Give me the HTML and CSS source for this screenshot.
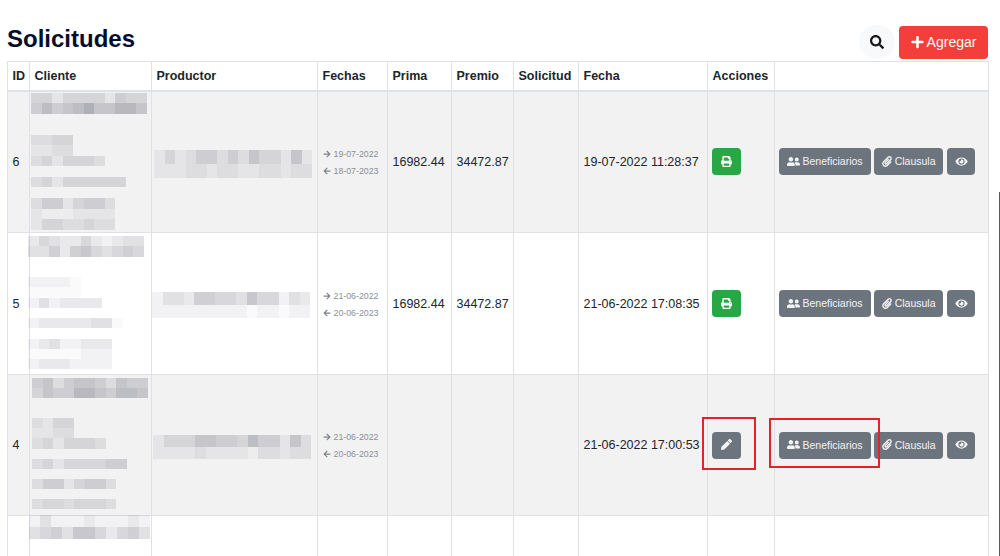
FILE: index.html
```html
<!DOCTYPE html>
<html lang="es">
<head>
<meta charset="utf-8">
<title>Solicitudes</title>
<link rel="stylesheet" href="styles.css">
</head>
<body>
<svg class="defs" aria-hidden="true">
  <symbol id="i-search" viewBox="0 0 512 512"><path d="M505 442.7L405.3 343c-4.5-4.5-10.6-7-17-7H372c27.6-35.3 44-79.7 44-128C416 93.1 322.9 0 208 0S0 93.1 0 208s93.1 208 208 208c48.3 0 92.7-16.4 128-44v16.3c0 6.4 2.5 12.5 7 17l99.7 99.7c9.4 9.4 24.6 9.4 33.9 0l28.3-28.3c9.4-9.4 9.4-24.6.1-34zM208 336c-70.7 0-128-57.2-128-128 0-70.7 57.2-128 128-128 70.7 0 128 57.2 128 128 0 70.7-57.2 128-128 128z"/></symbol>
  <symbol id="i-plus" viewBox="0 0 448 512"><path d="M416 208H272V64c0-17.67-14.33-32-32-32h-32c-17.67 0-32 14.33-32 32v144H32c-17.67 0-32 14.33-32 32v32c0 17.67 14.33 32 32 32h144v144c0 17.67 14.33 32 32 32h32c17.67 0 32-14.33 32-32V304h144c17.67 0 32-14.33 32-32v-32c0-17.67-14.33-32-32-32z"/></symbol>
  <symbol id="i-print" viewBox="0 0 512 512"><path d="M448 192V77.25c0-8.49-3.37-16.62-9.37-22.63L393.37 9.37c-6-6-14.14-9.37-22.63-9.37H96C78.33 0 64 14.33 64 32v160c-35.35 0-64 28.65-64 64v112c0 8.84 7.16 16 16 16h48v96c0 17.67 14.33 32 32 32h320c17.67 0 32-14.33 32-32v-96h48c8.84 0 16-7.16 16-16V256c0-35.35-28.65-64-64-64zm-64 256H128v-96h256v96zm0-224H128V64h192v48c0 8.84 7.16 16 16 16h48v96zm48 72c-13.25 0-24-10.75-24-24 0-13.26 10.75-24 24-24s24 10.74 24 24c0 13.25-10.75 24-24 24z"/></symbol>
  <symbol id="i-pencil" viewBox="0 0 512 512"><path d="M497.9 142.1l-46.1 46.1c-4.7 4.7-12.3 4.7-17 0l-111-111c-4.7-4.7-4.7-12.3 0-17l46.1-46.1c18.7-18.7 49.1-18.7 67.9 0l60.1 60.1c18.8 18.7 18.8 49.1 0 67.9zM284.2 99.8L21.6 362.4.4 483.9c-2.9 16.4 11.4 30.6 27.8 27.8l121.5-21.3 262.6-262.6c4.7-4.7 4.7-12.3 0-17l-111-111c-4.8-4.7-12.4-4.7-17.1 0z"/></symbol>
  <symbol id="i-users" viewBox="0 0 640 512"><path d="M192 256c61.9 0 112-50.1 112-112S253.9 32 192 32 80 82.1 80 144s50.1 112 112 112zm76.8 32h-8.3c-20.8 10-43.9 16-68.5 16s-47.6-6-68.5-16h-8.3C51.6 288 0 339.6 0 403.2V432c0 26.5 21.5 48 48 48h288c26.5 0 48-21.5 48-48v-28.8c0-63.6-51.6-115.2-115.2-115.2zM480 256c53 0 96-43 96-96s-43-96-96-96-96 43-96 96 43 96 96 96zm48 32h-3.8c-13.9 4.8-28.6 8-44.2 8s-30.3-3.2-44.2-8H432c-20.4 0-39.2 5.9-55.7 15.4 24.4 26.3 39.7 61.2 39.7 99.8v38.4c0 2.2-.5 4.3-.6 6.4H592c26.5 0 48-21.5 48-48 0-61.9-50.1-112-112-112z"/></symbol>
  <symbol id="i-clip" viewBox="0 0 448 512"><path d="M43.246 466.142c-58.43-60.289-57.341-157.511 1.386-217.581L254.392 34c44.316-45.332 116.351-45.336 160.671 0 43.89 44.894 43.943 117.329 0 162.276L232.214 383.128c-29.855 30.537-78.633 30.111-107.982-.998-28.275-29.97-27.368-77.473 1.452-106.953l143.743-146.835c6.182-6.314 16.312-6.422 22.626-.241l22.861 22.379c6.315 6.182 6.422 16.312.241 22.626L171.427 319.927c-4.932 5.045-5.236 13.428-.648 18.292 4.372 4.634 11.245 4.711 15.688.165l182.849-186.851c19.613-20.062 19.613-52.725-.011-72.798-19.189-19.627-49.957-19.637-69.154 0L90.39 293.295c-34.763 35.56-35.299 93.12-1.191 128.313 34.01 35.093 88.985 35.137 123.058.286l172.06-175.999c6.177-6.319 16.307-6.433 22.626-.256l22.877 22.364c6.319 6.177 6.434 16.307.256 22.626l-172.06 175.998c-59.576 60.938-155.943 60.216-214.77-.485z"/></symbol>
  <symbol id="i-eye" viewBox="0 0 576 512"><path d="M572.52 241.4C518.29 135.59 410.93 64 288 64S57.68 135.64 3.48 241.41a32.35 32.35 0 0 0 0 29.19C57.71 376.41 165.07 448 288 448s230.32-71.64 284.52-177.41a32.35 32.35 0 0 0 0-29.19zM288 400a144 144 0 1 1 144-144 143.93 143.93 0 0 1-144 144zm0-240a95.31 95.31 0 0 0-25.31 3.79 47.85 47.85 0 0 1-66.9 66.9A95.78 95.78 0 1 0 288 160z"/></symbol>
  <symbol id="i-right" viewBox="0 0 448 512"><path d="M190.5 66.9l22.2-22.2c9.4-9.4 24.6-9.4 33.9 0L441 239c9.4 9.4 9.4 24.6 0 33.9L246.6 467.3c-9.4 9.4-24.6 9.4-33.9 0l-22.2-22.2c-9.5-9.5-9.3-25 .4-34.3L311.4 296H24c-13.3 0-24-10.7-24-24v-32c0-13.3 10.7-24 24-24h287.4L190.9 101.2c-9.8-9.3-10-24.8-.4-34.3z"/></symbol>
  <symbol id="i-left" viewBox="0 0 448 512"><path d="M257.5 445.1l-22.2 22.2c-9.4 9.4-24.6 9.4-33.9 0L7 273c-9.4-9.4-9.4-24.6 0-33.9L201.4 44.7c9.4-9.4 24.6-9.4 33.9 0l22.2 22.2c9.5 9.5 9.3 25-.4 34.3L136.6 216H424c13.3 0 24 10.7 24 24v32c0 13.3-10.7 24-24 24H136.6l120.5 114.8c9.8 9.3 10 24.8.4 34.3z"/></symbol>
</svg>

<header class="top">
  <h1 class="title">Solicitudes</h1>
  <div class="tools">
    <button class="search" type="button"><svg class="ic-search"><use href="#i-search"/></svg></button>
    <button class="add" type="button"><svg class="ic-plus"><use href="#i-plus"/></svg>Agregar</button>
  </div>
</header>

<table class="grid">
  <colgroup>
    <col class="c-id"><col class="c-client"><col class="c-prod"><col class="c-dates"><col class="c-prima"><col class="c-premio"><col class="c-sol"><col class="c-date"><col class="c-act"><col class="c-more">
  </colgroup>
  <thead>
    <tr><th>ID</th><th>Cliente</th><th>Productor</th><th>Fechas</th><th>Prima</th><th>Premio</th><th>Solicitud</th><th>Fecha</th><th>Acciones</th><th></th></tr>
  </thead>
  <tbody>
    <tr class="r1">
      <td>6</td>
      <td class="blur"><div class="mosaic client h1 o1" data-rows="33133331433 46456855775 - - 2233 1122 2313332 - 231333333 - 24413442 10001111 13322322"></div></td>
      <td class="blur-mid"><div class="mosaic prod p1" data-rows="131244242533151 111221221122122"></div></td>
      <td class="dates"><div class="d"><svg class="ic-arrow"><use href="#i-right"/></svg>19-07-2022</div><div class="d"><svg class="ic-arrow"><use href="#i-left"/></svg>18-07-2023</div></td>
      <td>16982.44</td><td>34472.87</td><td></td><td>19-07-2022 11:28:37</td>
      <td class="tight"><button class="btn ok" type="button"><svg class="ic-s"><use href="#i-print"/></svg></button></td>
      <td class="tight"><div class="acts">
        <button class="btn" type="button"><svg class="ic-users"><use href="#i-users"/></svg>Beneficiarios</button>
        <button class="btn" type="button"><svg class="ic-clip"><use href="#i-clip"/></svg>Clausula</button>
        <button class="btn eye" type="button"><svg class="ic-eye"><use href="#i-eye"/></svg></button>
      </div></td>
    </tr>
    <tr class="r2">
      <td>5</td>
      <td class="blur"><div class="mosaic client h2 o2" data-rows="24322421233 33525643454 - - 11110 00000 1312222 - 122222330 - 12311222 00000111 12221111"></div></td>
      <td class="blur-mid"><div class="mosaic prod p2" data-rows="133255443644132 111111111011011"></div></td>
      <td class="dates"><div class="d"><svg class="ic-arrow"><use href="#i-right"/></svg>21-06-2022</div><div class="d"><svg class="ic-arrow"><use href="#i-left"/></svg>20-06-2023</div></td>
      <td>16982.44</td><td>34472.87</td><td></td><td>21-06-2022 17:08:35</td>
      <td class="tight"><button class="btn ok" type="button"><svg class="ic-s"><use href="#i-print"/></svg></button></td>
      <td class="tight"><div class="acts">
        <button class="btn" type="button"><svg class="ic-users"><use href="#i-users"/></svg>Beneficiarios</button>
        <button class="btn" type="button"><svg class="ic-clip"><use href="#i-clip"/></svg>Clausula</button>
        <button class="btn eye" type="button"><svg class="ic-eye"><use href="#i-eye"/></svg></button>
      </div></td>
    </tr>
    <tr class="r3">
      <td>4</td>
      <td class="blur"><div class="mosaic client h3 o3" data-rows="45245542544 35447754665 - - 2133 1122 2313332 - 231333344 - 24413442 - 23323332"></div></td>
      <td class="blur-mid"><div class="mosaic prod p3" data-rows="133355443644152 111121111022122"></div></td>
      <td class="dates"><div class="d"><svg class="ic-arrow"><use href="#i-right"/></svg>21-06-2022</div><div class="d"><svg class="ic-arrow"><use href="#i-left"/></svg>20-06-2023</div></td>
      <td></td><td></td><td></td><td>21-06-2022 17:00:53</td>
      <td class="tight"><button class="btn" type="button"><svg class="ic-s"><use href="#i-pencil"/></svg></button></td>
      <td class="tight"><div class="acts">
        <button class="btn" type="button"><svg class="ic-users"><use href="#i-users"/></svg>Beneficiarios</button>
        <button class="btn" type="button"><svg class="ic-clip"><use href="#i-clip"/></svg>Clausula</button>
        <button class="btn eye" type="button"><svg class="ic-eye"><use href="#i-eye"/></svg></button>
      </div></td>
    </tr>
    <tr class="r4">
      <td></td>
      <td class="blur"><div class="mosaic client h4 o4" data-rows="13111211121 34536642453"></div></td>
      <td></td><td></td><td></td><td></td><td></td><td></td><td></td><td></td>
    </tr>
  </tbody>
</table>

<div class="mark mark-edit"></div>
<div class="mark mark-ben"></div>
<div class="edge"></div>
<script src="script.js"></script>
</body>
</html>
```

FILE: styles.css
```css
* { box-sizing: border-box; }
html, body { margin: 0; padding: 0; }
body {
  position: relative;
  height: 556px;
  overflow: hidden;
  background: #fff;
  color: #212529;
  font-family: "Liberation Sans", Arial, sans-serif;
  font-size: 12.5px;
}
.defs { display: none; }
svg { fill: currentColor; display: block; flex: none; }

.top {
  display: flex;
  justify-content: space-between;
  align-items: flex-start;
  height: 61px;
  padding: 25px 12px 0 7px;
}
.title {
  margin: 0;
  font-size: 24px;
  line-height: 28px;
  font-weight: 700;
  color: #070b2c;
}
.tools { display: flex; align-items: center; gap: 4px; }
.search {
  width: 36px;
  height: 34px;
  border: 0;
  border-radius: 50%;
  background: #f8f9fa;
  color: #16181b;
  display: flex;
  align-items: center;
  justify-content: center;
  padding: 0;
}
.ic-search { width: 14px; height: 14px; }
.add {
  width: 89px;
  height: 33px;
  border: 0;
  border-radius: 4px;
  background: #f43e3a;
  color: #fff;
  font: 14px "Liberation Sans", Arial, sans-serif;
  display: flex;
  align-items: center;
  justify-content: center;
  gap: 3px;
  padding: 0;
}
.ic-plus { width: 13px; height: 14px; }

.grid {
  border-collapse: collapse;
  table-layout: fixed;
  width: 981px;
  margin-left: 7px;
}
.c-id { width: 22px; }
.c-client { width: 122px; }
.c-prod { width: 166px; }
.c-dates { width: 70px; }
.c-prima { width: 64px; }
.c-premio { width: 62px; }
.c-sol { width: 65px; }
.c-date { width: 129px; }
.c-act { width: 67px; }
.c-more { width: 214px; }
.grid th, .grid td {
  border: 1px solid #dee2e6;
  padding: 0 4.5px;
  text-align: left;
  vertical-align: middle;
  white-space: nowrap;
}
.grid th {
  height: 29px;
  font-weight: 700;
  border-bottom: 2px solid #dee2e6;
}
.r1 td { height: 142px; }
.r2 td { height: 142px; }
.r3 td { height: 141px; }
.r4 td { height: 141px; }
.r1, .r3 { background: #f2f2f3; }

.grid td.blur { padding: 0; vertical-align: top; }
.grid td.blur-mid { padding: 0; }
.grid td.tight { padding: 0 0 0 3.5px; }

.mosaic { display: flex; flex-direction: column; }
.mrow { display: flex; flex: none; }
.mrow span { display: block; flex: none; }
.client .mrow span { width: 10.55px; }
.prod .mrow span { width: 10.55px; }
.client.h1 .mrow { height: 10.55px; }
.client.h2 .mrow { height: 10.25px; }
.client.h3 .mrow { height: 10.08px; }
.client.h4 .mrow { height: 12px; }
.client.o4 .mrow span { width: 11px; }
.o1 { margin: 1px 0 0 1px; }
.o2 { margin: 3px 0 0 -2px; }
.o3 { margin: 3px 0 0 2px; }
.o4 { margin: -1px 0 0 -1px; }
.prod.p1 { margin: 4px 0 0 2px; }
.prod.p1 .mrow { height: 14px; }
.prod.p2 { margin: 2px 0 0 0; }
.prod.p2 .mrow { height: 13px; }
.prod.p3 { margin: 3px 0 0 1px; }
.prod.p3 .mrow { height: 12px; }

.s0 { background: rgba(40, 40, 60, .025); }
.s1 { background: rgba(40, 40, 60, .06); }
.s2 { background: rgba(40, 40, 60, .1); }
.s3 { background: rgba(40, 40, 60, .14); }
.s4 { background: rgba(40, 40, 60, .18); }
.s5 { background: rgba(40, 40, 60, .22); }
.s6 { background: rgba(40, 40, 60, .26); }
.s7 { background: rgba(40, 40, 60, .29); }
.s8 { background: rgba(40, 40, 60, .33); }

.grid td.dates { font-size: 8.8px; color: #8b9097; padding-top: 1px; }
.d { display: flex; align-items: center; gap: 2px; height: 17px; }
.ic-arrow { width: 8px; height: 8px; color: #7d828a; margin-right: 1px; }

.btn {
  height: 27px;
  border: 0;
  border-radius: 4px;
  background: #6c757d;
  color: #f3f4f5;
  font: 10.5px "Liberation Sans", Arial, sans-serif;
  display: flex;
  align-items: center;
  padding: 0 8px 1px;
  gap: 3px;
  flex: none;
}
.btn.ok { background: #28a745; color: #fff; }
.grid td > .btn { width: 29px; justify-content: center; padding: 0 0 1px; }
.btn.eye { width: 28px; justify-content: center; padding: 0 0 1px; margin-left: 1px; }
.acts { display: flex; gap: 3px; }
.ic-s { width: 11px; height: 11px; }
.ic-users { width: 13px; height: 11px; }
.ic-clip { width: 10px; height: 11px; }
.ic-eye { width: 13px; height: 11px; }

.mark {
  position: absolute;
  border: 2px solid #e3222a;
}
.mark-edit { left: 702px; top: 417px; width: 54px; height: 53px; }
.mark-ben { left: 769px; top: 418px; width: 111px; height: 50px; }
.edge {
  position: absolute;
  left: 999px;
  top: 192px;
  width: 1px;
  bottom: 0;
  background: #5a5a5a;
}
```

FILE: script.js
```js
document.querySelectorAll('.mosaic').forEach(function (m) {
  m.dataset.rows.split(' ').forEach(function (row) {
    var r = document.createElement('div');
    r.className = 'mrow';
    if (row !== '-') {
      row.split('').forEach(function (c) {
        var s = document.createElement('span');
        s.className = 's' + c;
        r.appendChild(s);
      });
    }
    m.appendChild(r);
  });
});
```
